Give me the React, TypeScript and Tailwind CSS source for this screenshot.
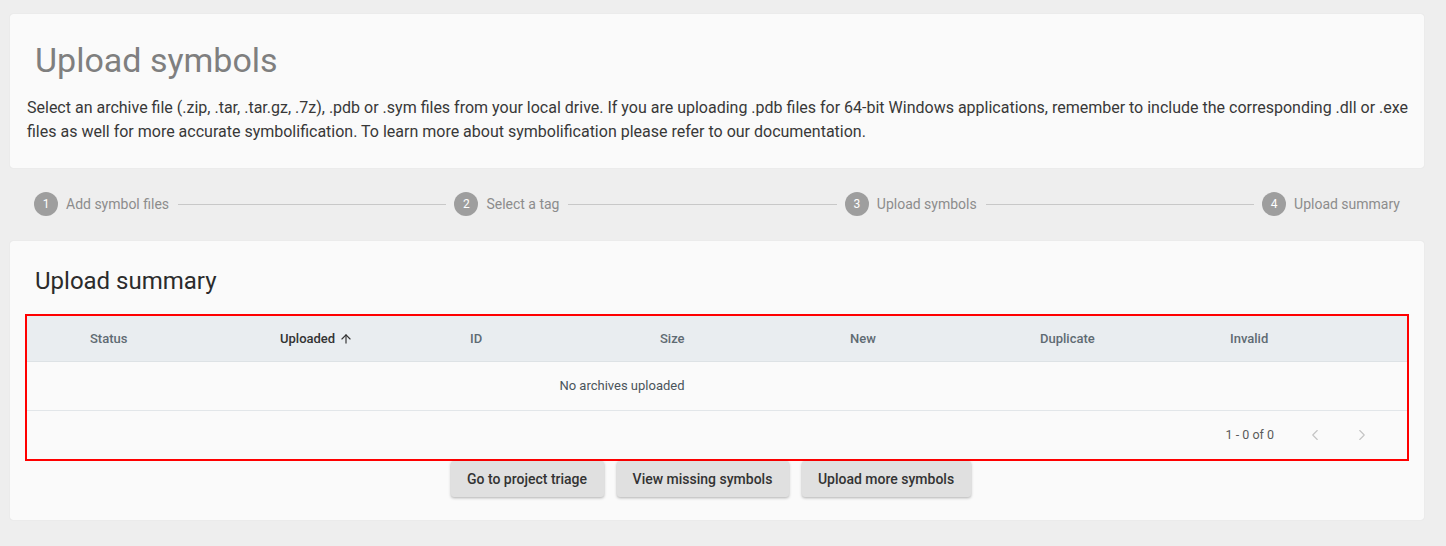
import { Fragment } from "react";
import { ArrowUp, ChevronLeft, ChevronRight } from "lucide-react";

const steps = ["Add symbol files", "Select a tag", "Upload symbols", "Upload summary"];
const columns = ["Status", "Uploaded", "ID", "Size", "New", "Duplicate", "Invalid"];

function Stepper() {
  return (
    <div className="flex items-center px-6 pt-6 pb-[25px]">
      {steps.map((label, i) => (
        <Fragment key={label}>
          <div className="flex h-6 w-6 shrink-0 items-center justify-center rounded-full bg-[#9e9e9e] text-[12px] text-white">
            {i + 1}
          </div>
          <span className="ml-2 shrink-0 text-[14px] text-[#8c8c8c]">{label}</span>
          {i < steps.length - 1 && <div className="ml-[9px] mr-2 h-px flex-1 bg-[#c8c8c8]" />}
        </Fragment>
      ))}
    </div>
  );
}

function SummaryTable() {
  return (
    <div className="mx-[15px] border-2 border-[#ff0000]">
      <div className="flex h-[46px] items-center overflow-hidden border-b border-[#dde2e5] bg-[#e9edf0] pl-[63px] text-[13px] font-medium text-[#5f6b73]">
        {columns.map((col) => (
          <div key={col} className="flex w-[190px] shrink-0 items-center">
            {col === "Uploaded" ? (
              <span className="flex items-center text-[#333]">
                {col}
                <ArrowUp size={14} strokeWidth={2} className="ml-1" />
              </span>
            ) : (
              col
            )}
          </div>
        ))}
      </div>
      <div className="flex h-[49px] items-center border-b border-[#e2e6e9] bg-[#fafafa]">
        <div className="w-[1190px] text-center text-[13px] text-[#4a545b]">No archives uploaded</div>
      </div>
      <div className="flex h-[48px] items-center justify-end bg-[#fafafa] pr-[36px] text-[12.5px] text-[#5a5a5a]">
        <span>1 - 0 of 0</span>
        <ChevronLeft size={18} strokeWidth={1.5} className="ml-[32px] text-[#c4c4c4]" />
        <ChevronRight size={18} strokeWidth={1.5} className="ml-[29px] text-[#c4c4c4]" />
      </div>
    </div>
  );
}

export default function App() {
  return (
    <div className="h-[546px] w-full bg-[#eeeeee] pt-[14px] pl-[10px] pr-[22px] font-['Roboto',sans-serif]">
      <div className="h-[154px] rounded-[3px] bg-[#fafafa] pl-[17px] pr-[12px] pt-[24px] shadow-[0_0_1px_rgba(0,0,0,0.15)]">
        <h1 className="pl-2 text-[34px] leading-[44px] text-[#7f7f7f]">Upload symbols</h1>
        <p className="mt-[14px] text-[16px] leading-[24px] text-[#383838]">
          Select an archive file (.zip, .tar, .tar.gz, .7z), .pdb or .sym files from your local drive. If you are uploading
          .pdb files for 64-bit Windows applications, remember to include the corresponding .dll or .exe files as well for
          more accurate symbolification. To learn more about symbolification please refer to our documentation.
        </p>
      </div>

      <Stepper />

      <div className="h-[279px] rounded-[3px] bg-[#fafafa] pt-[24px] shadow-[0_0_1px_rgba(0,0,0,0.15)]">
        <h2 className="pl-[25px] text-[24px] leading-[32px] text-[#2b2b2b]">Upload summary</h2>
        <div className="mt-[17px]">
          <SummaryTable />
        </div>
        <div className="flex justify-center gap-[13px] pr-[13px]">
          <button className="h-9 w-[153px] rounded-[3px] bg-[#e0e0e0] text-[14px] font-medium text-[#333] shadow-[0_1px_3px_rgba(0,0,0,0.3)]">
            Go to project triage
          </button>
          <button className="h-9 w-[172px] rounded-[3px] bg-[#e0e0e0] text-[14px] font-medium text-[#333] shadow-[0_1px_3px_rgba(0,0,0,0.3)]">
            View missing symbols
          </button>
          <button className="h-9 w-[169px] rounded-[3px] bg-[#e0e0e0] text-[14px] font-medium text-[#333] shadow-[0_1px_3px_rgba(0,0,0,0.3)]">
            Upload more symbols
          </button>
        </div>
      </div>
    </div>
  );
}
